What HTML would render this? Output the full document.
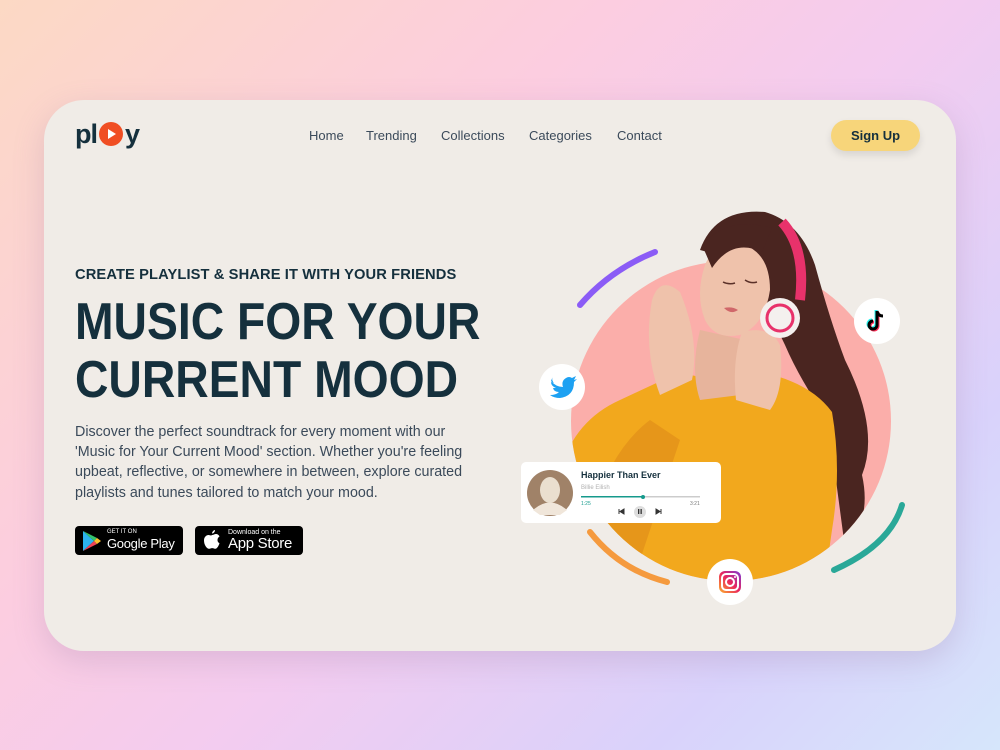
<!DOCTYPE html>
<html><head><meta charset="utf-8"><style>
*{margin:0;padding:0;box-sizing:border-box}
body{width:1000px;height:750px;overflow:hidden;font-family:"Liberation Sans",sans-serif;
background:linear-gradient(135deg,#fcd9c4 0%,#fccde0 35%,#f3ccf0 55%,#d9d2fb 80%,#d6e6fb 100%);position:relative}
.card{position:absolute;left:44px;top:100px;width:912px;height:551px;border-radius:40px;background:#f0ece7;box-shadow:0 10px 30px rgba(150,120,160,.25);overflow:hidden}
.logo{position:absolute;left:75px;top:119px;font-size:27px;font-weight:bold;color:#15303d;letter-spacing:-1px}
.nav{position:absolute;top:128px;font-size:13px;color:#3b4a5a}
.btn{position:absolute;left:831px;top:120px;width:89px;height:31px;border-radius:16px;background:#f7d57a;box-shadow:0 4px 8px rgba(0,0,0,.1);text-align:center;line-height:31px;font-size:13px;font-weight:bold;color:#15303d}
.sub{position:absolute;left:75px;top:266px;font-size:15px;font-weight:bold;color:#15303d;letter-spacing:.1px;transform:scaleX(.98);transform-origin:left}
.h1{position:absolute;left:75px;top:293px;font-size:52px;line-height:58px;font-weight:bold;color:#15303d;white-space:nowrap;transform:scaleX(.89);transform-origin:left}
.p{position:absolute;left:75px;top:422px;font-size:14.3px;line-height:20.2px;color:#3b4a5a;white-space:nowrap}
.store{position:absolute;top:526px;height:29px;background:#000;border-radius:4px;color:#fff}
</style></head><body>
<div class="card"></div>
<div class="logo">pl<span style="display:inline-block;width:24px;height:24px;border-radius:50%;background:#f04e23;vertical-align:-3px;position:relative;margin:0 2px"><span style="position:absolute;left:9px;top:7px;border-left:8px solid #fff;border-top:5px solid transparent;border-bottom:5px solid transparent"></span></span>y</div>
<div class="nav" style="left:309px">Home</div>
<div class="nav" style="left:366px">Trending</div>
<div class="nav" style="left:441px">Collections</div>
<div class="nav" style="left:529px">Categories</div>
<div class="nav" style="left:617px">Contact</div>
<div class="btn">Sign Up</div>
<div class="sub">CREATE PLAYLIST &amp; SHARE IT WITH YOUR FRIENDS</div>
<div class="h1">MUSIC FOR YOUR<br>CURRENT MOOD</div>
<div class="p">Discover the perfect soundtrack for every moment with our<br>'Music for Your Current Mood' section. Whether you're feeling<br>upbeat, reflective, or somewhere in between, explore curated<br>playlists and tunes tailored to match your mood.</div>
<div class="store" style="left:75px;width:108px">
<svg width="20" height="22" style="position:absolute;left:7px;top:4px" viewBox="0 0 20 22"><path d="M1 1 L12 11 L1 21Z" fill="#2bb3f0"/><path d="M1 1 L15 8 L12 11Z" fill="#34c36b"/><path d="M1 21 L15 14 L12 11Z" fill="#ee4256"/><path d="M15 8 L19 11 L15 14 L12 11Z" fill="#fbc02d"/></svg>
<div style="position:absolute;left:32px;top:3px;font-size:6px">GET IT ON</div>
<div style="position:absolute;left:32px;top:10px;font-size:13px;letter-spacing:-.3px">Google Play</div></div>
<div class="store" style="left:195px;width:108px">
<svg width="18" height="22" style="position:absolute;left:8px;top:3px" viewBox="0 0 18 22"><path d="M12 1c0 2-1.5 3.5-3 3.5C9 3 10.5 1.2 12 1Z M9 6c1.5 0 2.5-1 4-1 1.5 0 3 1 3.5 2.5-1.5 1-2 2-2 3.5 0 2 1.5 3 2 3.3-.8 2.5-2.5 5.5-4 5.5-1.2 0-1.7-.7-3.3-.7s-2 .7-3.3.7C4 19.8 1 16 1 11.5 1 8 3.3 6 5.5 6 7 6 8 7 9 6Z" fill="#fff"/></svg>
<div style="position:absolute;left:33px;top:3px;font-size:7px">Download on the</div>
<div style="position:absolute;left:33px;top:9px;font-size:15px;letter-spacing:-.3px">App Store</div></div>

<svg width="1000" height="750" style="position:absolute;left:0;top:0" viewBox="0 0 1000 750">
<defs><clipPath id="c"><rect x="500" y="200" width="420" height="221"/><circle cx="731" cy="421" r="160"/></clipPath></defs>
<circle cx="731" cy="421" r="160" fill="#fbaeaa"/>
<path d="M580 305 Q610 270 655 252" stroke="#8b5cf6" stroke-width="6" fill="none" stroke-linecap="round"/>
<path d="M590 532 Q620 570 667 582" stroke="#f59a3e" stroke-width="6" fill="none" stroke-linecap="round"/>
<path d="M834 570 Q890 545 902 505" stroke="#2aa898" stroke-width="6" fill="none" stroke-linecap="round"/>
<g clip-path="url(#c)">
<path d="M700 250 Q715 208 765 212 Q800 222 815 265 Q830 320 845 360 Q880 430 862 475 Q872 520 845 548 L828 420 Q800 380 785 345 L745 262Z" fill="#4a2520"/>
<path d="M560 470 Q575 420 620 400 L680 372 Q720 385 760 372 Q810 382 832 412 Q842 470 832 530 L822 600 L580 600 Q560 540 560 470Z" fill="#f2a81d"/>
<path d="M590 520 Q610 450 650 420 L680 440 Q660 500 640 560Z" fill="#e6961a"/>
<path d="M700 330 Q690 370 700 400 L740 395 Q745 360 745 340Z" fill="#e7b49c"/>
<path d="M652 300 Q660 275 680 292 Q700 340 692 380 L660 395 Q643 350 652 300Z" fill="#efc2ab"/>
<path d="M742 332 Q770 325 780 345 Q785 390 770 410 L736 400 Q732 360 742 332Z" fill="#efc2ab"/>
<path d="M705 265 Q715 240 745 245 Q770 255 770 290 Q765 325 740 335 Q715 340 705 320 Q695 295 705 265Z" fill="#efc2ab"/>
<path d="M723 282 q6 3 12 1 M745 280 q6 4 12 2" stroke="#5a3028" stroke-width="1.5" fill="none"/>
<path d="M724 308 q8 -2 14 2 q-7 5 -14 -2Z" fill="#d0676a"/>
<path d="M702 245 Q728 215 772 228 L762 252 Q732 238 712 268Z" fill="#4a2520"/>
<path d="M782 222 Q806 248 800 300" stroke="#e8326b" stroke-width="10" fill="none"/>
<circle cx="780" cy="318" r="20" fill="#f4f0ee"/><circle cx="780" cy="318" r="13" fill="none" stroke="#e8326b" stroke-width="3"/>
</g>
<g fill="#fff"><circle cx="562" cy="387" r="23"/><circle cx="877" cy="321" r="23"/><circle cx="730" cy="582" r="23"/></g>
<path d="M551 381 q5 6 12 6 q-2-6 3-9 q3-2 6 0 l4-2 -2 4 3-1 -3 3 q0 14-14 16 q-6 0-10-3 q6 0 9-3 q-5 0-6-4 h3 q-5-2-5-6 l3 1 q-3-3-1-7Z" fill="#1da1f2"/>
<g transform="translate(866,309)"><path d="M11 2v14a4 4 0 1 1-4-4" fill="none" stroke="#25f4ee" stroke-width="3" transform="translate(-1,-1)"/><path d="M11 2v14a4 4 0 1 1-4-4" fill="none" stroke="#fe2c55" stroke-width="3" transform="translate(1,1)"/><path d="M11 2v14a4 4 0 1 1-4-4 M11 2q1 5 6 5" fill="none" stroke="#000" stroke-width="3"/></g>
<defs><linearGradient id="ig" x1="0" y1="1" x2="1" y2="0"><stop offset="0" stop-color="#fdb22b"/><stop offset=".5" stop-color="#e9265d"/><stop offset="1" stop-color="#7c3bd6"/></linearGradient></defs>
<rect x="719" y="571" width="22" height="22" rx="6" fill="url(#ig)"/><rect x="722" y="574" width="16" height="16" rx="4" fill="none" stroke="#fff" stroke-width="2"/><circle cx="730" cy="582" r="4" fill="none" stroke="#fff" stroke-width="2"/><circle cx="735" cy="577" r="1" fill="#fff"/>
<rect x="521" y="462" width="200" height="61" rx="5" fill="#fff"/>
<circle cx="550" cy="493" r="23" fill="#a08268"/><ellipse cx="550" cy="490" rx="10" ry="13" fill="#eadfcf"/><path d="M533 510 Q550 495 567 510 L560 515 L540 515Z" fill="#f0e6da"/>
<text x="581" y="478" font-size="9" font-weight="bold" fill="#15303d" font-family="Liberation Sans">Happier Than Ever</text>
<text x="581" y="489" font-size="6" fill="#b0b0b0" font-family="Liberation Sans">Billie Eilish</text>
<rect x="581" y="496" width="119" height="1.5" fill="#ccc"/><rect x="581" y="496" width="62" height="1.5" fill="#159a8c"/><circle cx="643" cy="497" r="2" fill="#159a8c"/>
<text x="581" y="505" font-size="5" fill="#159a8c" font-family="Liberation Sans">1:25</text><text x="690" y="505" font-size="5" fill="#777" font-family="Liberation Sans">3:21</text>
<circle cx="640" cy="512" r="6" fill="#ddd"/><rect x="638" y="509" width="1.3" height="5" fill="#333"/><rect x="640.5" y="509" width="1.3" height="5" fill="#333"/>
<path d="M619 509v5M624 509v5l-4-2.5Z" stroke="#333" stroke-width="1" fill="#333"/><path d="M661 509v5M656 509v5l4-2.5Z" stroke="#333" stroke-width="1" fill="#333"/>
</svg>
</body></html>
